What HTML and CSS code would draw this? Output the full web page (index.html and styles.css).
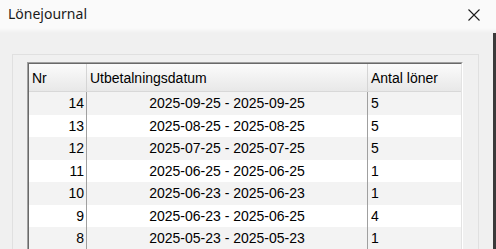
FILE: index.html
```html
<html>
<head>
<meta charset="utf-8">
<title>Lönejournal</title>
<link rel="stylesheet" href="styles.css">
</head>
<body>
	<div class="titlebar">
		<span class="title">Lönejournal</span>
		<svg class="close" width="12" height="12" viewBox="0 0 12 12">
			<path d="M0.5 0.5 L11.5 11.5 M11.5 0.5 L0.5 11.5" stroke="#1b1b1b" stroke-width="1.1" fill="none"/>
		</svg>
	</div>
	<div class="window">
		<div class="main">
			<div class="panel">
				<div class="list-outer">
					<div class="list">
						<div class="row head">
							<div class="cell nr">Nr</div>
							<div class="cell date">Utbetalningsdatum</div>
							<div class="cell count">Antal löner</div>
						</div>
						<div class="row alt">
							<div class="cell nr">14</div>
							<div class="cell date">2025-09-25 - 2025-09-25</div>
							<div class="cell count">5</div>
						</div>
						<div class="row">
							<div class="cell nr">13</div>
							<div class="cell date">2025-08-25 - 2025-08-25</div>
							<div class="cell count">5</div>
						</div>
						<div class="row alt">
							<div class="cell nr">12</div>
							<div class="cell date">2025-07-25 - 2025-07-25</div>
							<div class="cell count">5</div>
						</div>
						<div class="row">
							<div class="cell nr">11</div>
							<div class="cell date">2025-06-25 - 2025-06-25</div>
							<div class="cell count">1</div>
						</div>
						<div class="row alt">
							<div class="cell nr">10</div>
							<div class="cell date">2025-06-23 - 2025-06-23</div>
							<div class="cell count">1</div>
						</div>
						<div class="row">
							<div class="cell nr">9</div>
							<div class="cell date">2025-06-23 - 2025-06-25</div>
							<div class="cell count">4</div>
						</div>
						<div class="row alt">
							<div class="cell nr">8</div>
							<div class="cell date">2025-05-23 - 2025-05-23</div>
							<div class="cell count">1</div>
						</div>
					</div>
				</div>
			</div>
		</div>
		<div class="edge"></div>
	</div>
</body>
</html>
```

FILE: styles.css
```css
* {
  margin: 0;
  padding: 0;
  box-sizing: border-box;
}

html, body {
  height: 249px;
  overflow: hidden;
}

body {
  font-family: "Liberation Sans", Arial, sans-serif;
  font-size: 14px;
  color: #000;
  background: #f0f0f0;
  display: flex;
  flex-direction: column;
}

.titlebar {
  height: 33px;
  flex: none;
  background: linear-gradient(#fafafa 0, #fafafa 28px, #f0f0f0 33px);
  display: flex;
  align-items: center;
  justify-content: space-between;
  padding: 0 16px 6px 8px;
}

.title {
  font-family: "Noto Sans", sans-serif;
  font-size: 14px;
  color: #1a1a1a;
}

.close {
  display: block;
  margin-top: 2px;
}

.window {
  flex: 1;
  display: flex;
  min-height: 0;
}

.main {
  flex: 1;
  padding: 21px 14px 0 12px;
  overflow: hidden;
}

.edge {
  width: 3px;
  background: #3a3a3a;
}

.panel {
  border: 1px solid #e0e0e0;
  border-bottom: none;
  background: #f0f0f0;
  padding: 7px 15px 0 14px;
}

.list-outer {
  border-top: 1px solid #a0a0a0;
  border-left: 1px solid #a0a0a0;
  border-right: 1px solid #ffffff;
}

.list {
  border-top: 1px solid #696969;
  border-left: 1px solid #696969;
  border-right: 1px solid #e3e3e3;
  background: #fff;
}

.row {
  display: flex;
  height: 22.5px;
  align-items: center;
}

.row.alt {
  background: #f3f3f3;
}

.row.head {
  height: 28px;
  background: linear-gradient(#fbfbfb, #e8e8e8);
  border-bottom: 1px solid #d8d8d8;
}

.cell {
  height: 100%;
  display: flex;
  align-items: center;
  border-right: 1px solid #a0a0a0;
  white-space: nowrap;
}

.head .cell {
  border-right: 1px solid #d5d5d5;
  padding-left: 3px;
}

.nr {
  width: 58px;
  justify-content: flex-end;
  padding-right: 2px;
}

.date {
  width: 281px;
  justify-content: center;
}

.count {
  flex: 1;
  padding-left: 3px;
  border-right: none;
}

.head .nr,
.head .date {
  justify-content: flex-start;
}

.head .count {
  border-right: none;
}
```
